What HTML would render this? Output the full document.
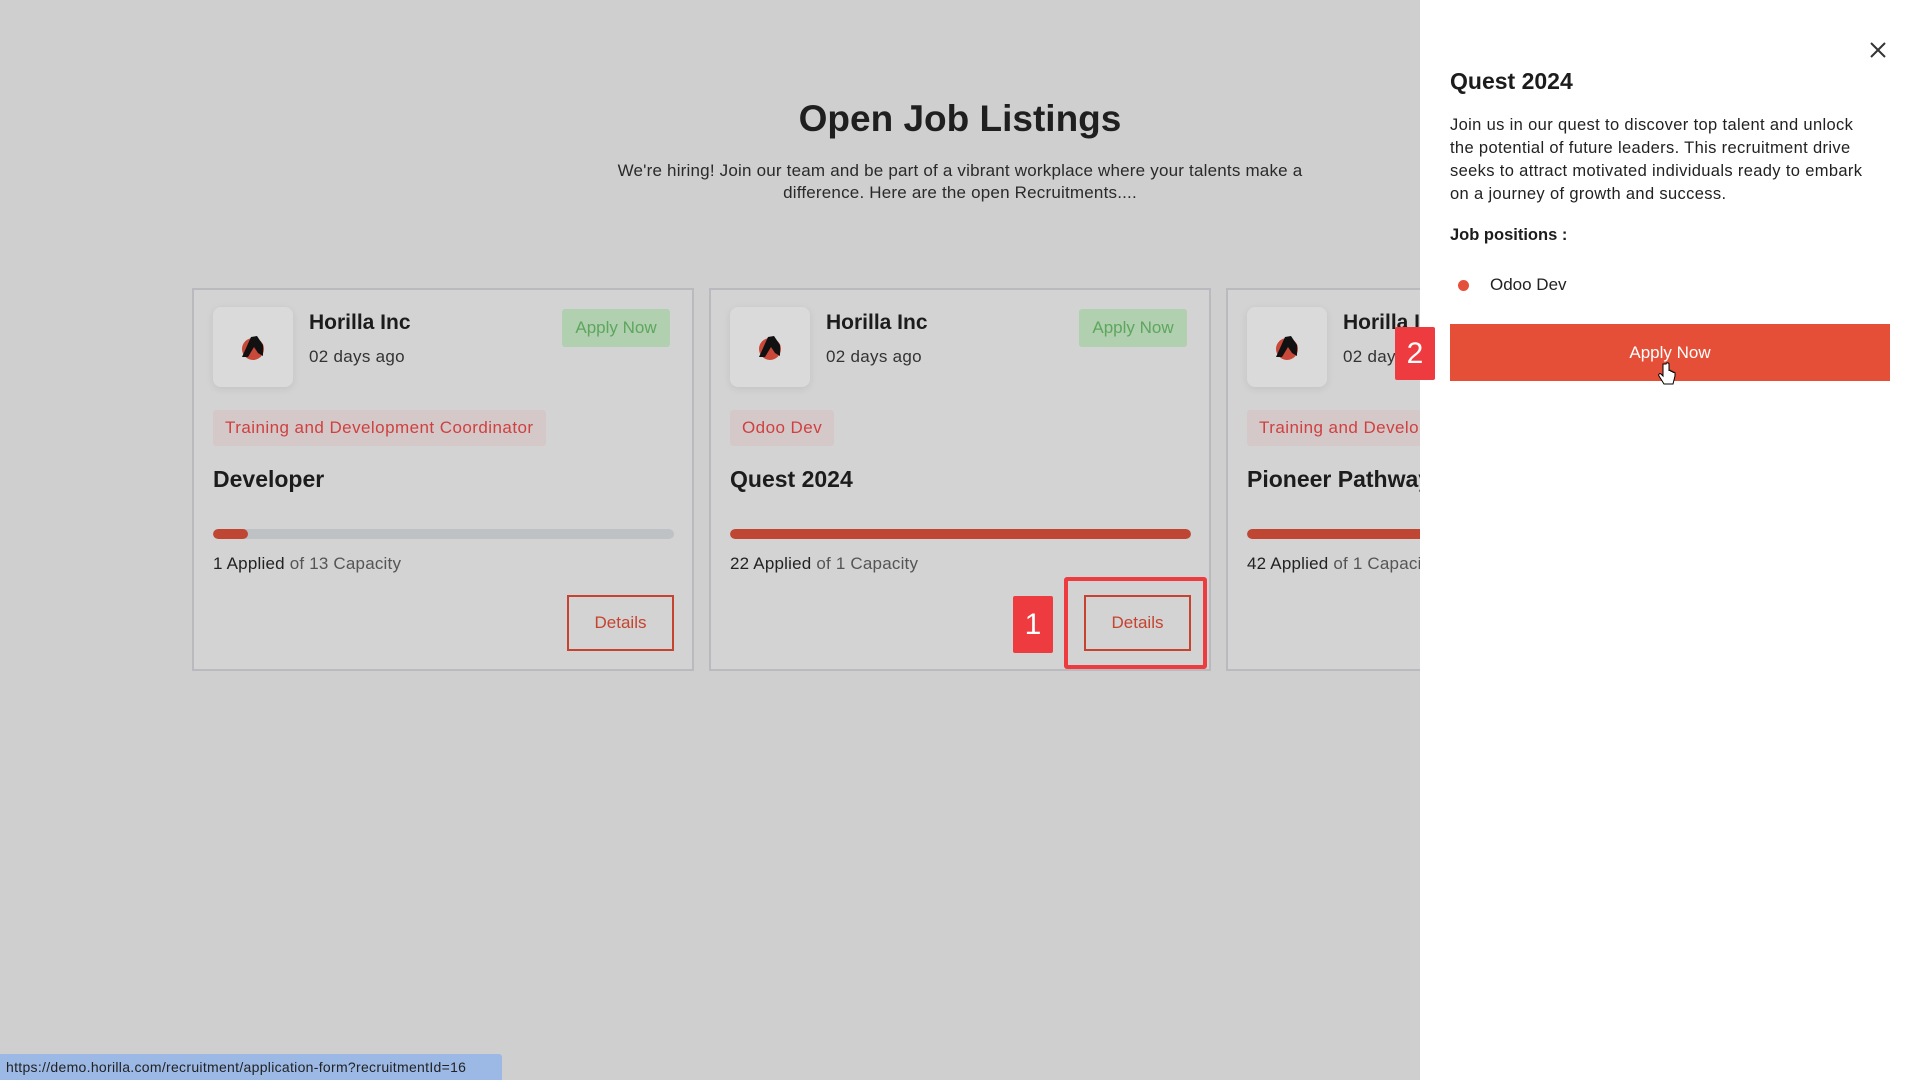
<!DOCTYPE html>
<html><head><meta charset="utf-8"><style>
*{box-sizing:border-box;margin:0;padding:0}
body{width:1920px;height:1080px;overflow:hidden;background:#cfcfcf;font-family:"Liberation Sans",sans-serif;position:relative;color:#1c1c1c}
.abs{position:absolute}
h1{position:absolute;left:0;width:1920px;text-align:center;top:98px;font-size:37px;font-weight:bold;color:#1f1f1f}
.sub{position:absolute;left:590px;width:740px;text-align:center;top:160px;font-size:17px;line-height:22px;color:#2a2a2a;letter-spacing:0.2px}
.card{position:absolute;top:288px;width:502px;height:383px;background:#d3d3d3;border:2px solid #b9b9be}
.logo{position:absolute;left:19px;top:17px;width:80px;height:80px;background:#dadada;border-radius:8px;box-shadow:0 2px 8px rgba(0,0,0,.08)}
.co{position:absolute;left:115px;top:21px;font-size:21px;font-weight:bold}
.ago{position:absolute;left:115px;top:57px;font-size:17px;color:#333;letter-spacing:0.3px}
.ap{position:absolute;left:368px;top:19px;width:108px;height:38px;background:#b0d0b0;border-radius:3px;color:#5ea65e;font-size:17px;line-height:38px;text-align:center}
.tag{position:absolute;left:19px;top:120px;height:36px;padding:0 12px;background:#d5c8c9;border-radius:3px;color:#d04040;font-size:17px;line-height:36px;white-space:nowrap;letter-spacing:0.45px}
.tt{position:absolute;left:19px;top:176px;font-size:23px;font-weight:bold;color:#1c1c1c;white-space:nowrap}
.bar{position:absolute;left:19px;top:239px;width:461px;height:10px;border-radius:5px;background:#bfc2c5;overflow:hidden}
.bar i{display:block;height:10px;background:#c04634;border-radius:5px}
.cap{position:absolute;left:19px;top:264px;font-size:17px;color:#222;white-space:nowrap;letter-spacing:0.2px}
.cap span{color:#555}
.det{position:absolute;left:373px;top:305px;width:107px;height:56px;border:2px solid #c5432f;color:#c5432f;font-size:17px;line-height:52px;text-align:center}
.panel{position:absolute;left:1420px;top:0;width:500px;height:1080px;background:#fff}
</style></head><body>
<h1>Open Job Listings</h1>
<div class="sub">We're hiring! Join our team and be part of a vibrant workplace where your talents make a difference. Here are the open Recruitments....</div>

<div class="card" style="left:192px">
<div class="logo"><svg width="80" height="80" viewBox="0 0 80 80"><circle cx="40" cy="42" r="11" fill="#c8483a"/><path d="M29 50 L38 30 L44 29 L50 38 L50 49 L45 46 L41 40 L35 50 Z" fill="#111"/></svg></div>
<div class="co">Horilla Inc</div><div class="ago">02 days ago</div><div class="ap">Apply Now</div>
<div class="tag">Training and Development Coordinator</div>
<div class="tt">Developer</div>
<div class="bar"><i style="width:35px"></i></div>
<div class="cap">1 Applied <span>of 13 Capacity</span></div>
<div class="det">Details</div>
</div>

<div class="card" style="left:709px">
<div class="logo"><svg width="80" height="80" viewBox="0 0 80 80"><circle cx="40" cy="42" r="11" fill="#c8483a"/><path d="M29 50 L38 30 L44 29 L50 38 L50 49 L45 46 L41 40 L35 50 Z" fill="#111"/></svg></div>
<div class="co">Horilla Inc</div><div class="ago">02 days ago</div><div class="ap">Apply Now</div>
<div class="tag">Odoo Dev</div>
<div class="tt">Quest 2024</div>
<div class="bar"><i style="width:461px"></i></div>
<div class="cap">22 Applied <span>of 1 Capacity</span></div>
<div class="det">Details</div>
</div>

<div class="card" style="left:1226px">
<div class="logo"><svg width="80" height="80" viewBox="0 0 80 80"><circle cx="40" cy="42" r="11" fill="#c8483a"/><path d="M29 50 L38 30 L44 29 L50 38 L50 49 L45 46 L41 40 L35 50 Z" fill="#111"/></svg></div>
<div class="co">Horilla Inc</div><div class="ago">02 days ago</div><div class="ap">Apply Now</div>
<div class="tag">Training and Development Coordinator</div>
<div class="tt">Pioneer Pathways</div>
<div class="bar"><i style="width:461px"></i></div>
<div class="cap">42 Applied <span>of 1 Capacity</span></div>
<div class="det">Details</div>
</div>

<div class="abs" style="left:1013px;top:596px;width:40px;height:57px;background:#ee3b3f;color:#fff;font-size:30px;line-height:57px;text-align:center;border-radius:2px">1</div>
<div class="abs" style="left:1064px;top:577px;width:143px;height:92px;border:4px solid #ee3b3f;border-radius:3px"></div>

<div class="panel">
<svg class="abs" style="left:448px;top:40px" width="20" height="20" viewBox="0 0 20 20"><path d="M3 3L17 17M17 3L3 17" stroke="#333" stroke-width="2"/></svg>
<div class="abs" style="left:30px;top:68px;font-size:23px;font-weight:bold;color:#1c1c1c">Quest 2024</div>
<div class="abs" style="left:30px;top:114px;width:470px;font-size:16.5px;line-height:23px;color:#222;white-space:nowrap;letter-spacing:0.35px">Join us in our quest to discover top talent and unlock<br>the potential of future leaders. This recruitment drive<br>seeks to attract motivated individuals ready to embark<br>on a journey of growth and success.</div>
<div class="abs" style="left:30px;top:226px;font-size:16.5px;font-weight:bold;color:#1c1c1c">Job positions :</div>
<div class="abs" style="left:38px;top:280px;width:11px;height:11px;border-radius:50%;background:#e5503a"></div>
<div class="abs" style="left:70px;top:275px;font-size:17px;color:#222">Odoo Dev</div>
<div class="abs" style="left:30px;top:324px;width:440px;height:57px;background:#e54f38;color:#fff;font-size:17px;line-height:57px;text-align:center">Apply Now</div>
</div>
<div class="abs" style="left:1395px;top:327px;width:40px;height:53px;background:#ee3b3f;color:#fff;font-size:30px;line-height:53px;text-align:center;border-radius:2px">2</div>
<svg class="abs" style="left:1658px;top:362px" width="18" height="24" viewBox="0 0 18 24"><path d="M5 2v12l-2-2c-1-1-3 0-2 2l5 8h9l2-8V11c0-1-2-1-2 0v-1c0-1-2-1-2 0V9c0-1-2-1-2 0V2c0-1.5-3-1.5-3 0z" fill="#fff" stroke="#000" stroke-width="1"/></svg>

<div class="abs" style="left:0;top:1054px;width:502px;height:26px;background:#9cb9e6;color:#222;font-size:14px;line-height:26px;padding-left:6px;border-top-right-radius:3px;letter-spacing:0.3px">https://demo.horilla.com/recruitment/application-form?recruitmentId=16</div>
</body></html>
